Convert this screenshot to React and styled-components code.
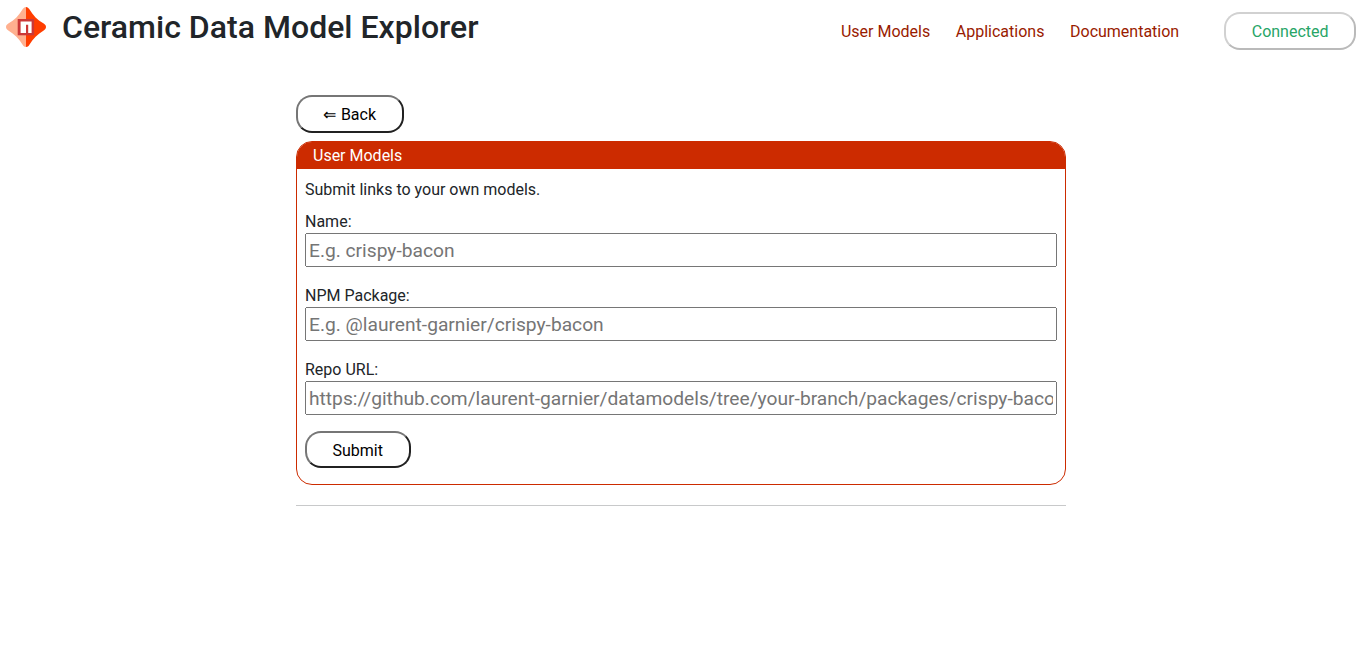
import React from "react";
import styled, { createGlobalStyle } from "styled-components";

const GlobalStyle = createGlobalStyle`
  *, *::before, *::after { box-sizing: border-box; }
  body {
    margin: 0;
    background: #fff;
    color: #212529;
    font: 400 16px/24px Roboto, sans-serif;
  }
  button, input { font-family: inherit; }
`;

const Header = styled.header`
  display: flex;
  align-items: flex-start;
  justify-content: space-between;
  height: 95px;
  padding: 7px 6px 0;
`;

const Brand = styled.div`
  display: flex;
  gap: 16px;
`;

const Logo = styled.svg`
  display: block;
  width: 40px;
  height: 40px;
`;

const Title = styled.h1`
  margin: 0;
  font-size: 32px;
  line-height: 40px;
  font-weight: 500;
  letter-spacing: 0.02px;
  white-space: nowrap;
`;

const Nav = styled.nav`
  display: flex;
  align-items: center;
  padding-top: 5px;
`;

const NavLink = styled.a`
  margin-right: 25.6px;
  padding-top: 2px;
  color: #991b00;
  text-decoration: none;

  &:last-of-type { margin-right: 44.8px; }
`;

const PillButton = styled.button`
  display: block;
  width: ${(p) => p.$width}px;
  height: ${(p) => p.$height || 38}px;
  padding: 2px 0 0;
  border: 2px solid;
  border-color: ${(p) => (p.$muted ? "#d1d1d1 #bababa #bababa #d1d1d1" : "#767676 #212121 #212121 #767676")};
  border-radius: 16px;
  background: #fff;
  color: ${(p) => (p.$muted ? "#27a567" : "#000")};
  font-size: 16px;
  line-height: 24px;
  text-indent: ${(p) => (p.$muted ? 0.3 : -0.6)}px;
  word-spacing: 0.6px;
`;

const Main = styled.main`
  width: 770px;
  margin: 0 auto;
`;

const Card = styled.section`
  margin-top: 8px;
  height: 344px;
  border: 1px solid #cc2b00;
  border-radius: 16px;
  overflow: hidden;
`;

const CardTitle = styled.div`
  height: 27px;
  padding: 2px 16px 0;
  background: #cc2b00;
  color: #fff;
`;

const Form = styled.form`
  padding: 9px 8px 8px;
`;

const Intro = styled.p`
  margin: 0 0 8px;
`;

const Field = styled.label`
  display: block;
`;

const FieldName = styled.span`
  display: block;
  margin-bottom: -1px;
`;

const TextInput = styled.input`
  display: block;
  width: 100%;
  height: 34px;
  margin-bottom: 17px;
  font-size: 19.2px;
`;

const Fields = styled.div`
  margin-bottom: -1px;
`;

const Divider = styled.hr`
  height: 1px;
  margin: 20px 0 0;
  border: 0;
  background: #c8c9ca;
`;

const fields = [
  ["Name:", "E.g. crispy-bacon"],
  ["NPM Package:", "E.g. @laurent-garnier/crispy-bacon"],
  ["Repo URL:", "https://github.com/laurent-garnier/datamodels/tree/your-branch/packages/crispy-bacon"],
];

export default function App() {
  return (
    <>
      <GlobalStyle />
      <Header>
        <Brand>
          <Logo viewBox="0 0 40 40">
            <path d="M20 0C18.5 0 17.4 1 16.6 2.3C13 8.5 8.5 13 2.3 16.6C1 17.4 0 18.5 0 20C0 21.5 1 22.6 2.3 23.4C8.5 27 13 31.5 16.6 37.7C17.4 39 18.5 40 20 40Z" fill="#ffb08f" />
            <path d="M20 0C21.5 0 22.6 1 23.4 2.3C27 8.5 31.5 13 37.7 16.6C39 17.4 40 18.5 40 20C40 21.5 39 22.6 37.7 23.4C31.5 27 27 31.5 23.4 37.7C22.6 39 21.5 40 20 40Z" fill="#ff3d00" />
            <path d="M11.7 12H28.1V28.3H11.7Z" fill="#cb3837" />
            <path d="M14.6 14.5H25.6V26H22.2V17.8H20V26H14.6Z" fill="#fff" />
          </Logo>
          <Title>Ceramic Data Model Explorer</Title>
        </Brand>
        <Nav>
          <NavLink>User Models</NavLink>
          <NavLink>Applications</NavLink>
          <NavLink>Documentation</NavLink>
          <PillButton $width={132} $muted>Connected</PillButton>
        </Nav>
      </Header>
      <Main>
        <PillButton $width={108}>⇐ Back</PillButton>
        <Card>
          <CardTitle>User Models</CardTitle>
          <Form>
            <Intro>Submit links to your own models.</Intro>
            <Fields>
              {fields.map(([label, placeholder]) => (
                <Field key={label}>
                  <FieldName>{label}</FieldName>
                  <TextInput placeholder={placeholder} />
                </Field>
              ))}
            </Fields>
            <PillButton type="button" $width={106} $height={37}>Submit</PillButton>
          </Form>
        </Card>
        <Divider />
      </Main>
    </>
  );
}
